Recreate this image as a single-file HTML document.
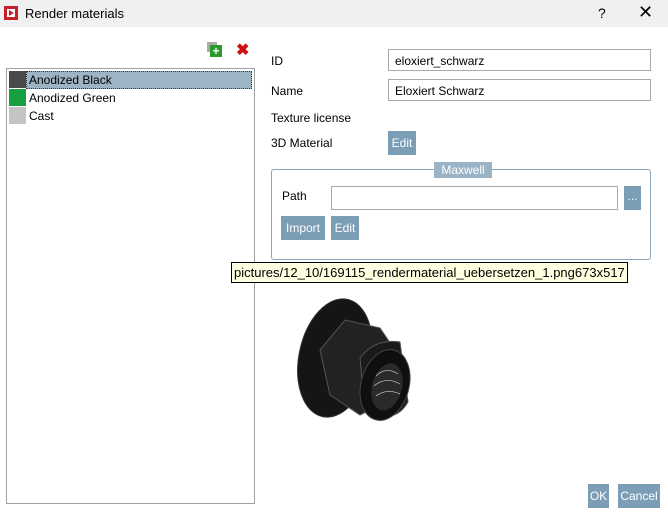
<!DOCTYPE html>
<html><head><style>
body{margin:0;width:668px;height:515px;background:#fff;font-family:"Liberation Sans",sans-serif;font-size:12px;color:#000;position:relative;overflow:hidden}
.a{position:absolute}
.btn{position:absolute;background:#7b9db5;color:#fff;font-size:12px;text-align:center;line-height:24px;height:24px}
.inp{position:absolute;border:1px solid #a9a9a9;background:#fff;height:22px;line-height:22px;padding-left:6px;box-sizing:border-box}
</style></head><body>
<div class="a" style="left:0;top:0;width:668px;height:27px;background:#f0f0f0"></div>
<div class="a" style="left:4px;top:6px;width:14px;height:14px;background:#c8202a"></div>
<div class="a" style="left:7px;top:9px;width:8px;height:8px;background:#fff"></div>
<div class="a" style="left:9px;top:10px;width:0;height:0;border-left:5px solid #c8202a;border-top:3px solid transparent;border-bottom:3px solid transparent"></div>
<div class="a" style="left:25px;top:6px;font-size:13px">Render materials</div>
<div class="a" style="left:598px;top:5px;font-size:14px">?</div>
<div class="a" style="left:638px;top:2px;font-size:18px">✕</div>
<div class="a" style="left:207px;top:42px;width:10px;height:10px;background:#aaa"></div>
<div class="a" style="left:210px;top:45px;width:12px;height:12px;background:#2a9a2a;color:#fff;font-weight:bold;font-size:12px;line-height:12px;text-align:center">+</div>
<div class="a" style="left:236px;top:40px;color:#d01010;font-size:16px;font-weight:bold">✖</div>
<div class="a" style="left:6px;top:68px;width:249px;height:436px;border:1px solid #a0a0a0;box-sizing:border-box"></div>
<div class="a" style="left:9px;top:71px;width:17px;height:17px;background:#4a4a4a"></div>
<div class="a" style="left:26px;top:71px;width:224px;height:16px;background:#9db4c4;border:1px dotted #333"></div>
<div class="a" style="left:29px;top:73px">Anodized Black</div>
<div class="a" style="left:9px;top:89px;width:17px;height:17px;background:#17a040"></div>
<div class="a" style="left:29px;top:91px">Anodized Green</div>
<div class="a" style="left:9px;top:107px;width:17px;height:17px;background:#c4c4c4"></div>
<div class="a" style="left:29px;top:109px">Cast</div>
<div class="a" style="left:271px;top:54px">ID</div>
<div class="inp" style="left:388px;top:49px;width:263px">eloxiert_schwarz</div>
<div class="a" style="left:271px;top:84px">Name</div>
<div class="inp" style="left:388px;top:79px;width:263px">Eloxiert Schwarz</div>
<div class="a" style="left:271px;top:111px">Texture license</div>
<div class="a" style="left:271px;top:136px">3D Material</div>
<div class="btn" style="left:388px;top:131px;width:28px">Edit</div>
<div class="a" style="left:271px;top:169px;width:380px;height:91px;border:1px solid #8aa4b8;border-radius:3px;box-sizing:border-box"></div>
<div class="a" style="left:434px;top:162px;width:58px;height:16px;background:#9ab3c6;color:#fff;text-align:center;line-height:16px">Maxwell</div>
<div class="a" style="left:282px;top:189px">Path</div>
<div class="inp" style="left:331px;top:186px;width:287px;height:24px"></div>
<div class="btn" style="left:624px;top:186px;width:17px;height:24px;line-height:20px">...</div>
<div class="btn" style="left:281px;top:216px;width:44px">Import</div>
<div class="btn" style="left:331px;top:216px;width:28px">Edit</div>
<div class="a" style="left:231px;top:262px;border:1px solid #000;background:#ffffe1;padding:0 2px;height:19px;line-height:19px;font-size:13px">pictures/12_10/169115_rendermaterial_uebersetzen_1.png673x517</div>
<svg class="a" style="left:290px;top:290px" width="160" height="140">
<ellipse cx="45" cy="68" rx="36" ry="60" transform="rotate(12 45 68)" fill="#151515" stroke="#333"/>
<polygon points="30,60 55,30 90,38 105,60 100,110 70,125 40,105" fill="#222" stroke="#555"/>
<path d="M70,68 Q85,48 110,52 L118,112 Q105,135 75,122 Z" fill="#1a1a1a" stroke="#555"/>
<ellipse cx="95" cy="95" rx="24" ry="36" transform="rotate(15 95 95)" fill="#0f0f0f" stroke="#444"/>
<ellipse cx="97" cy="97" rx="15" ry="24" transform="rotate(15 97 97)" fill="#2a2a2a"/>
<path d="M86,86 Q96,76 108,84 M84,96 Q96,86 110,94 M86,106 Q97,98 110,104" stroke="#ccc" fill="none" stroke-width="0.7"/>
</svg>
<div class="btn" style="left:588px;top:484px;width:21px">OK</div>
<div class="btn" style="left:618px;top:484px;width:42px">Cancel</div>
</body></html>
